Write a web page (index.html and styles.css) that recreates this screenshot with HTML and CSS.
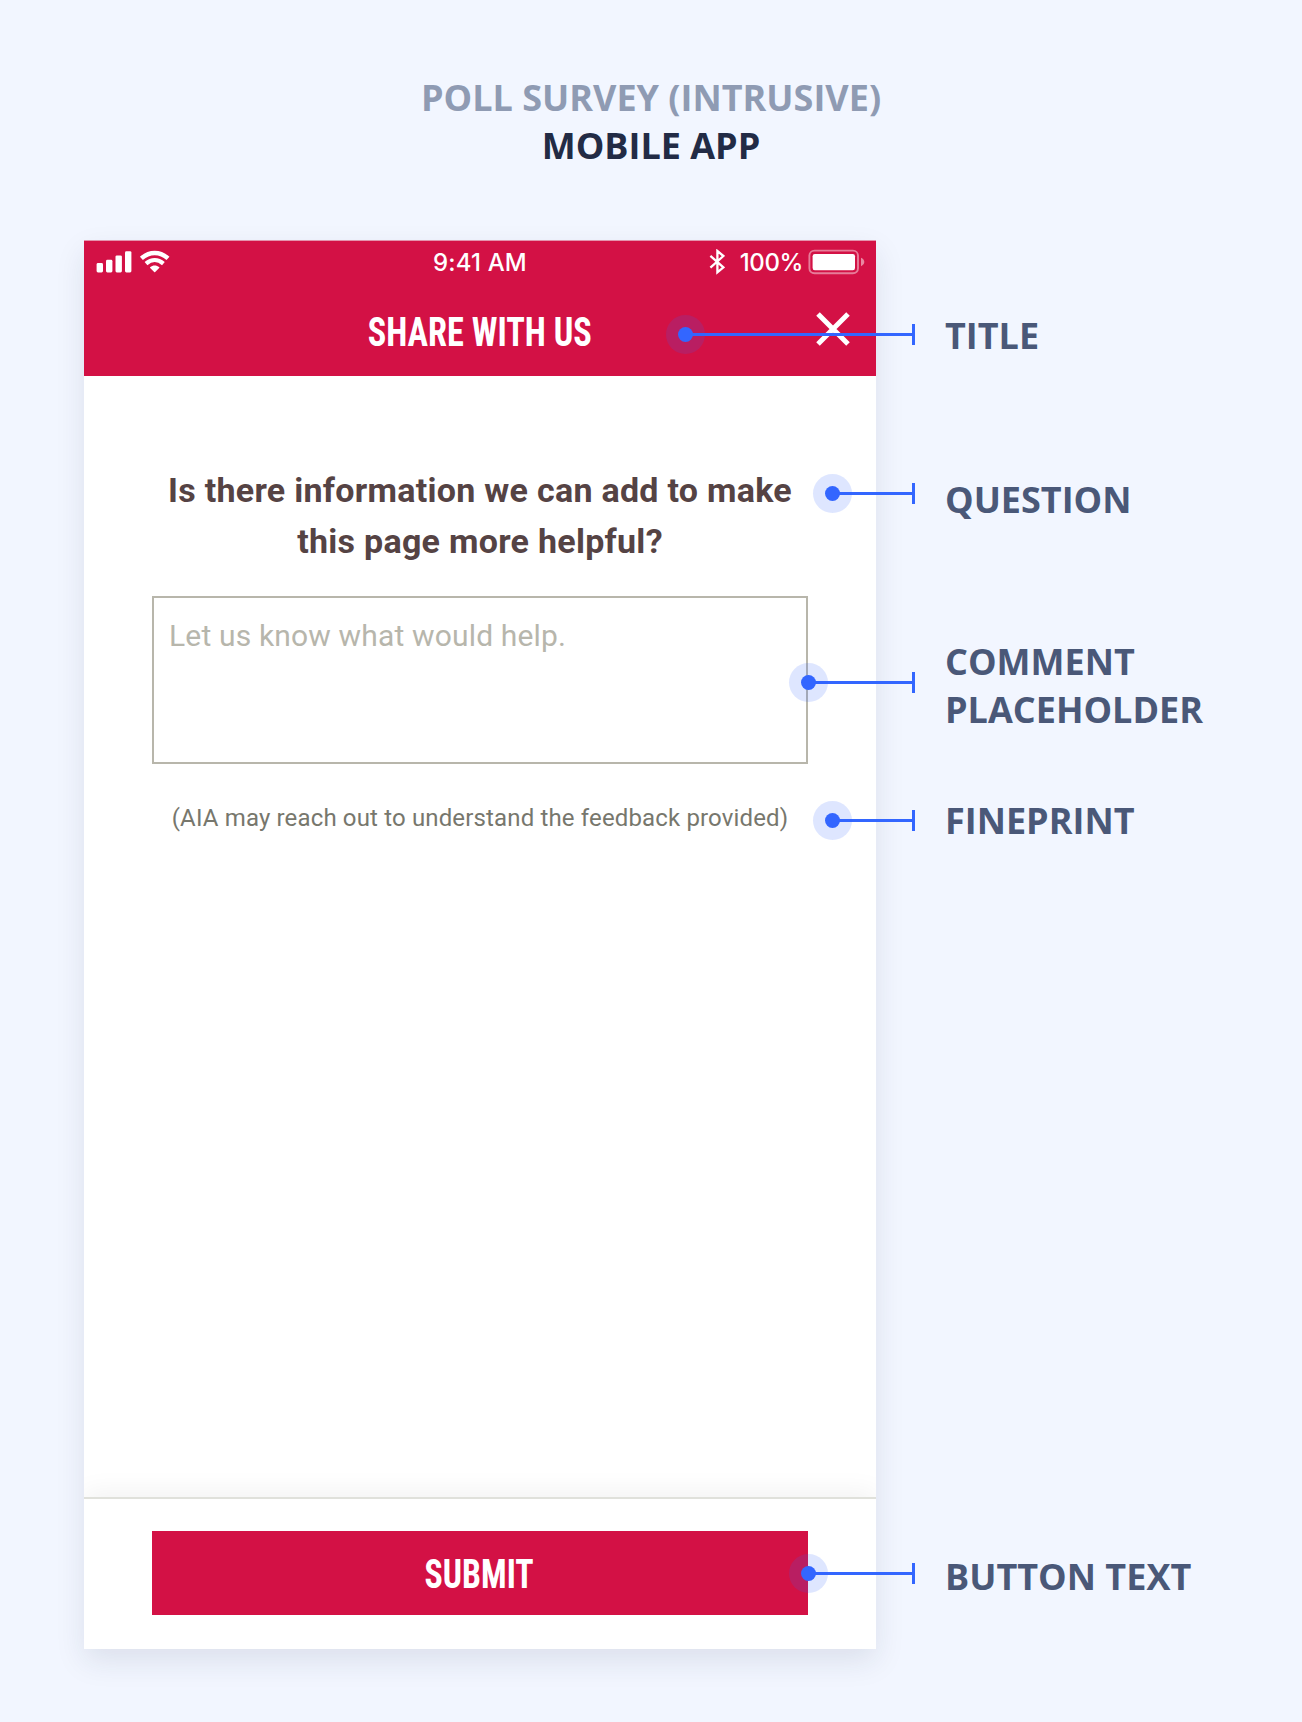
FILE: index.html
```html
<!DOCTYPE html>
<html lang="en">
<head>
<meta charset="utf-8">
<title>Poll survey (intrusive) – Mobile app</title>
<link rel="stylesheet" href="styles.css">
</head>
<body>
<header class="heading">
  <div class="heading-kind">POLL SURVEY (INTRUSIVE)</div>
  <h1 class="heading-platform">MOBILE APP</h1>
</header>

<main class="board">
  <section class="phone">
    <div class="topbar">
      <div class="status">
        <div class="status-left">
          <svg width="75" height="24" viewBox="0 0 75 24" fill="#fff">
            <rect x="0.6" y="13" width="6.4" height="9.4" rx="1.4"/>
            <rect x="10" y="9.8" width="6.4" height="12.6" rx="1.4"/>
            <rect x="19.5" y="5.4" width="6.4" height="17" rx="1.4"/>
            <rect x="29" y="1.2" width="6.4" height="21.2" rx="1.4"/>
            <g fill="none" stroke="#fff" stroke-width="4.4">
              <path d="M45.4 8.4C53.4 1.2 64 1.2 72 8.4"/>
              <path d="M50 13.6C55.4 8.9 62 8.9 67.4 13.6" stroke-width="4.2"/>
            </g>
            <path d="M54.1 17.2C56.9 14.8 60.5 14.8 63.3 17.2Q63.6 17.7 63.2 18.1L59.2 22Q58.7 22.4 58.2 22L54.2 18.1Q53.8 17.7 54.1 17.2Z"/>
          </svg>
        </div>
        <span class="clock">9:41 AM</span>
        <div class="status-right">
          <svg width="16" height="26" viewBox="0 0 16 26" fill="none" stroke="#fff" stroke-width="2.3">
            <path d="M1.4 6.9L14.4 18.4L8.4 23.4V2L14.4 7L1.4 18.6"/>
          </svg>
          <span class="percent">100%</span>
          <svg width="58" height="26" viewBox="0 0 58 26">
            <rect x="1.4" y="1.6" width="48.6" height="22.6" rx="5" fill="none" stroke="#fff" stroke-opacity="0.45" stroke-width="1.9"/>
            <rect x="4.6" y="5" width="42.4" height="16.2" rx="2.2" fill="#fff"/>
            <path d="M53 8.8C57.4 10.6 57.4 15.4 53 17.2Z" fill="#fff" fill-opacity="0.5"/>
          </svg>
        </div>
      </div>
      <div class="titlebar">
        <h2 class="title"><span class="narrow">SHARE WITH US</span></h2>
        <svg class="close" width="34" height="34" viewBox="0 0 34 34" stroke="#fff" stroke-width="5">
          <path d="M2 2L32 32M32 2L2 32"/>
        </svg>
      </div>
    </div>

    <div class="content">
      <p class="question">Is there information we can add to make<br>this page more helpful?</p>
      <div class="comment">Let us know what would help.</div>
      <p class="fineprint">(AIA may reach out to understand the feedback provided)</p>
    </div>

    <footer class="footer">
      <div class="submit"><span class="narrow">SUBMIT</span></div>
    </footer>

    <i class="pin pin-title"></i>
    <i class="pin pin-question"></i>
    <i class="pin pin-comment"></i>
    <i class="pin pin-fineprint"></i>
    <i class="pin pin-button"></i>
  </section>

  <aside class="labels">
    <div class="label label-title">TITLE</div>
    <div class="label label-question">QUESTION</div>
    <div class="label label-comment">COMMENT<br>PLACEHOLDER</div>
    <div class="label label-fineprint">FINEPRINT</div>
    <div class="label label-button">BUTTON TEXT</div>
  </aside>
</main>
</body>
</html>
```
FILE: styles.css
```css
* {
  box-sizing: border-box;
}

body {
  margin: 0;
  height: 1722px;
  background: #f2f6ff;
  font-family: "Open Sans", sans-serif;
  overflow: hidden;
}

h1, h2, p {
  margin: 0;
}

svg {
  display: block;
  flex: none;
}

.heading {
  height: 240px;
  padding-top: 74px;
  text-align: center;
  font-size: 36px;
  font-weight: 700;
  line-height: 48px;
}

.heading-kind {
  color: #8f9bb3;
}

.heading-platform {
  font: inherit;
  color: #222b45;
}

.board {
  display: flex;
  gap: 69px;
  padding-left: 84px;
}

/* Phone screen */
.phone {
  position: relative;
  display: flex;
  flex-direction: column;
  width: 792px;
  height: 1409px;
  background: #fff;
  box-shadow: 0 12px 28px rgba(34, 43, 69, 0.1);
}

.topbar {
  height: 136px;
  border-top: 1px solid #e494ad;
  background: #d31145;
  color: #fff;
}

.status {
  display: grid;
  grid-template-columns: 1fr auto 1fr;
  align-items: center;
  height: 42px;
  padding: 0 10px 0 12px;
  font-family: Inter, sans-serif;
  font-size: 24px;
  font-weight: 500;
}

.status-right {
  display: flex;
  justify-content: flex-end;
  align-items: center;
}

.clock {
  padding-right: 2px;
  letter-spacing: 0.15px;
}

.percent {
  margin: 0 5px 0 15px;
  letter-spacing: -0.4px;
}

.titlebar {
  display: grid;
  grid-template-columns: 1fr auto 1fr;
  align-items: center;
  height: 91px;
  padding-right: 26px;
  padding-left: 25px;
}

.title {
  grid-column: 2;
  padding-top: 7px;
  font-size: 40px;
  line-height: 48px;
}

.narrow {
  display: inline-block;
  font-family: "Roboto Condensed", Roboto, sans-serif;
  font-weight: 700;
  transform: scaleX(0.857);
}

.close {
  justify-self: end;
}

.content {
  flex: 1;
  display: flex;
  flex-direction: column;
  padding: 89px 68px 0;
  font-family: Roboto, sans-serif;
}

.question {
  color: #554344;
  font-size: 34px;
  font-weight: 700;
  letter-spacing: 0.28px;
  line-height: 50.5px;
  text-align: center;
}

.comment {
  height: 168px;
  margin-top: 30px;
  padding: 20px 15px;
  border: 2px solid #b8b6ab;
  color: #b7b6ac;
  font-size: 30px;
  letter-spacing: 0.16px;
  line-height: 36px;
}

.fineprint {
  margin-top: 39px;
  color: #77776d;
  font-size: 24px;
  letter-spacing: 0.15px;
  line-height: 30px;
  text-align: center;
  white-space: nowrap;
}

.footer {
  height: 152px;
  padding: 32px 68px 0;
  border-top: 2px solid #e0e1db;
  background: #fff;
  box-shadow: 0 -6px 24px rgba(0, 0, 0, 0.05);
  clip-path: inset(-40px 0 0 0);
}

.submit {
  height: 84px;
  background: #d31145;
  color: #fff;
  font-size: 40px;
  line-height: 84px;
  text-align: center;
}

.submit .narrow {
  transform: translateX(-0.5px) scaleX(0.845);
}

/* Callout pins: halo and dot, leader line, end tick */
.pin {
  position: absolute;
  right: -39px;
  height: 39px;
  background:
    linear-gradient(#36f, #36f) right center / 3px 21px no-repeat,
    linear-gradient(#36f, #36f) 19px center / 100% 3px no-repeat;
}

.pin::before,
.pin::after {
  content: "";
  position: absolute;
  border-radius: 50%;
}

.pin::before {
  inset: 0 auto 0 0;
  width: 39px;
  background: rgba(51, 102, 255, 0.16);
}

.pin::after {
  top: 12px;
  left: 12px;
  width: 15px;
  height: 15px;
  background: #36f;
}

.pin-title { top: 75px; left: 582px; }
.pin-question { top: 234px; left: 729px; }
.pin-comment { top: 423px; left: 705px; }
.pin-fineprint { top: 561px; left: 729px; }
.pin-button { top: 1314px; left: 705px; }

/* Callout labels */
.labels {
  color: #4a5878;
  font-size: 36px;
  font-weight: 700;
  line-height: 48px;
  white-space: nowrap;
}

.label-title { margin-top: 72px; }
.label-question { margin-top: 116px; }
.label-comment { margin-top: 114px; }
.label-fineprint { margin-top: 63px; }
.label-button { margin-top: 708px; }
```
